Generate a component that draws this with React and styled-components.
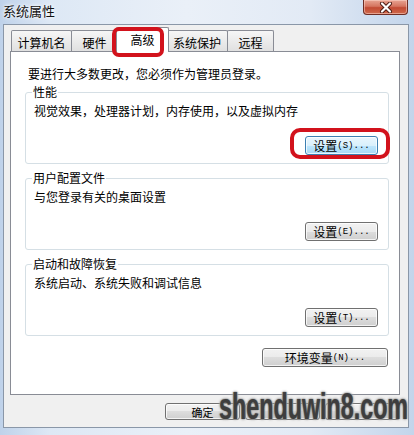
import styled, { createGlobalStyle } from "styled-components";

const GlobalStyle = createGlobalStyle`
  html, body {
    margin: 0;
    padding: 0;
  }
  body {
    font-family: "Noto Sans CJK SC", sans-serif;
    font-size: 12px;
    color: #000;
  }
`;

const Frame = styled.div`
  position: relative;
  width: 414px;
  height: 435px;
  box-sizing: border-box;
  padding: 0 5px 7px 3px;
  display: flex;
  flex-direction: column;
  overflow: hidden;
  background: linear-gradient(
    90deg,
    #bfd2ea 0%,
    #dde8f5 12%,
    #eaf0f8 45%,
    #e2eaf5 75%,
    #c3d5eb 100%
  );
`;

const TitleBar = styled.div`
  height: 24px;
  display: flex;
  justify-content: space-between;
  align-items: flex-start;
`;

const Title = styled.div`
  padding-top: 3px;
  font-size: 13px;
  line-height: 16px;
  color: #111;
  text-shadow: 0 0 5px #fff, 0 0 3px #fff;
`;

const CloseButton = styled.div`
  width: 45px;
  height: 15px;
  margin-right: 1px;
  box-sizing: border-box;
  border: 1px solid #6e2d24;
  border-top: none;
  border-radius: 0 0 4px 4px;
  background: linear-gradient(#e8a493 0%, #d57560 45%, #c24a33 55%, #cf6a4c 100%);
  box-shadow: inset 0 0 0 1px rgba(255, 220, 210, 0.5);
  display: flex;
  align-items: center;
  justify-content: center;
`;

const Client = styled.div`
  flex: 1;
  display: flex;
  flex-direction: column;
  background: #f0f0f0;
  border: 1px solid #8a97a8;
`;

const TabRow = styled.div`
  height: 26px;
  box-sizing: border-box;
  display: flex;
  align-items: flex-end;
  padding-left: 7px;
`;

const Tab = styled.div`
  position: relative;
  width: ${(p) => p.$w}px;
  height: ${(p) => (p.$active ? 25 : 21)}px;
  box-sizing: border-box;
  margin-left: ${(p) => (p.$active ? -2 : p.$first ? 0 : -1)}px;
  margin-right: ${(p) => (p.$active ? -2 : 0)}px;
  margin-bottom: ${(p) => (p.$active ? -1 : 0)}px;
  z-index: ${(p) => (p.$active ? 2 : 0)};
  border: 1px solid #898c95;
  border-bottom: none;
  border-radius: 2px 2px 0 0;
  background: ${(p) =>
    p.$active ? "#fff" : "linear-gradient(#f6f6f6 0%, #ebebeb 50%, #e0e0e0 100%)"};
  display: flex;
  align-items: center;
  justify-content: center;
  padding-top: ${(p) => (p.$active ? 0 : 3)}px;
  font-size: 12px;
  line-height: 14px;
`;

const Ring = styled.span`
  position: absolute;
  top: ${(p) => p.$t}px;
  right: ${(p) => p.$r}px;
  bottom: ${(p) => p.$b}px;
  left: ${(p) => p.$l}px;
  border: 4px solid #d2121c;
  border-radius: ${(p) => p.$radius}px;
  pointer-events: none;
  z-index: 3;
`;

const Panel = styled.div`
  flex: 1;
  margin: 0 8px 0 6px;
  border: 1px solid #898c95;
  background: #fff;
  padding: 14px 10px 0 14px;
  display: flex;
  flex-direction: column;
`;

const Intro = styled.div`
  margin-left: 3px;
  line-height: 16px;
`;

const GroupList = styled.div`
  margin-top: 3px;
  display: flex;
  flex-direction: column;
  gap: 7px;
`;

const Group = styled.fieldset`
  margin: 0;
  min-width: 0;
  padding: 0 10px 8px 8px;
  border: 1px solid #d5dfe5;
  border-radius: 3px;
`;

const Legend = styled.legend`
  padding: 0 1px;
  margin-left: -2px;
  font-size: 12px;
  line-height: 14px;
`;

const GroupText = styled.div`
  margin-top: 4px;
  line-height: 16px;
`;

const ButtonLine = styled.div`
  margin-top: ${(p) => p.$top}px;
  display: flex;
  justify-content: flex-end;
  padding-right: ${(p) => p.$right || 0}px;
`;

const Button = styled.div`
  position: relative;
  width: ${(p) => p.$w}px;
  height: ${(p) => p.$h || 19}px;
  box-sizing: border-box;
  border: 1px solid ${(p) => (p.$focused ? "#3c7fb1" : "#707070")};
  border-radius: 3px;
  background: ${(p) =>
    p.$focused
      ? "linear-gradient(#eaf6fd 0%, #d9f0fc 50%, #bee6fd 50%, #a7d9f5 100%)"
      : "linear-gradient(#f2f2f2 0%, #ebebeb 50%, #dddddd 50%, #cfcfcf 100%)"};
  box-shadow: inset 0 0 0 1px rgba(255, 255, 255, 0.75);
  display: flex;
  align-items: center;
  justify-content: center;
  font-size: ${(p) => p.$fs || 12}px;
  line-height: 14px;
  white-space: nowrap;
`;

const Hotkey = styled.span`
  font-family: "Liberation Mono", monospace;
  font-size: 9px;
  letter-spacing: 0;
`;

const BottomRow = styled.div`
  height: 32px;
  box-sizing: border-box;
  padding: 8px 8px 0 0;
  display: flex;
  justify-content: flex-end;
  align-items: flex-start;
  gap: 5px;
`;

const Watermark = styled.div`
  position: absolute;
  left: 219px;
  top: 388px;
  font-family: "Liberation Sans", Arial, sans-serif;
  font-weight: 700;
  font-size: 37px;
  line-height: 37px;
  color: #3e3e3e;
  white-space: nowrap;
  transform: scaleX(0.63);
  transform-origin: left top;
  text-shadow: 0 0 1px #7a7a7a, 0 0 2px #8a8a8a, 0 0 3px #a5a5a5,
    0 0 4px #c4c4c4;
  pointer-events: none;
`;

const tabs = [
  { label: "计算机名", w: 61 },
  { label: "硬件", w: 47 },
  { label: "高级", w: 53, active: true },
  { label: "系统保护", w: 62 },
  { label: "远程", w: 47 },
];

const groups = [
  {
    title: "性能",
    text: "视觉效果，处理器计划，内存使用，以及虚拟内存",
    key: "(S)...",
    focused: true,
  },
  { title: "用户配置文件", text: "与您登录有关的桌面设置", key: "(E)..." },
  { title: "启动和故障恢复", text: "系统启动、系统失败和调试信息", key: "(T)..." },
];

function CloseGlyph() {
  return (
    <svg width="14" height="11" viewBox="0 0 14 11">
      <path d="M3 1.5 L11 9.5 M11 1.5 L3 9.5" stroke="#4a1a12" strokeWidth="4" strokeLinecap="round" />
      <path d="M3 1.5 L11 9.5 M11 1.5 L3 9.5" stroke="#fff" strokeWidth="2.2" strokeLinecap="round" />
    </svg>
  );
}

export default function App() {
  return (
    <>
      <GlobalStyle />
      <Frame>
        <TitleBar>
          <Title>系统属性</Title>
          <CloseButton>
            <CloseGlyph />
          </CloseButton>
        </TitleBar>
        <Client>
          <TabRow>
            {tabs.map((t, i) => (
              <Tab key={t.label} $w={t.w} $active={t.active} $first={i === 0}>
                {t.label}
                {t.active && <Ring $t={-1} $r={4} $b={-5} $l={-5} $radius={7} />}
              </Tab>
            ))}
          </TabRow>
          <Panel>
            <Intro>要进行大多数更改，您必须作为管理员登录。</Intro>
            <GroupList>
              {groups.map((g) => (
                <Group key={g.title}>
                  <Legend>{g.title}</Legend>
                  <GroupText>{g.text}</GroupText>
                  <ButtonLine $top={17}>
                    <Button $w={73} $focused={g.focused}>
                      设置<Hotkey>{g.key}</Hotkey>
                      {g.focused && <Ring $t={-9} $r={-13} $b={-5} $l={-16} $radius={10} />}
                    </Button>
                  </ButtonLine>
                </Group>
              ))}
            </GroupList>
            <ButtonLine $top={12} $right={1}>
              <Button $w={126}>
                环境变量<Hotkey>(N)...</Hotkey>
              </Button>
            </ButtonLine>
          </Panel>
          <BottomRow>
            <Button $w={75} $h={17} $fs={11}>确定</Button>
            {/* labels of these two sit under the watermark */}
            <Button $w={75} $h={17} />
            <Button $w={75} $h={17} />
          </BottomRow>
        </Client>
        <Watermark>shenduwin8.com</Watermark>
      </Frame>
    </>
  );
}
